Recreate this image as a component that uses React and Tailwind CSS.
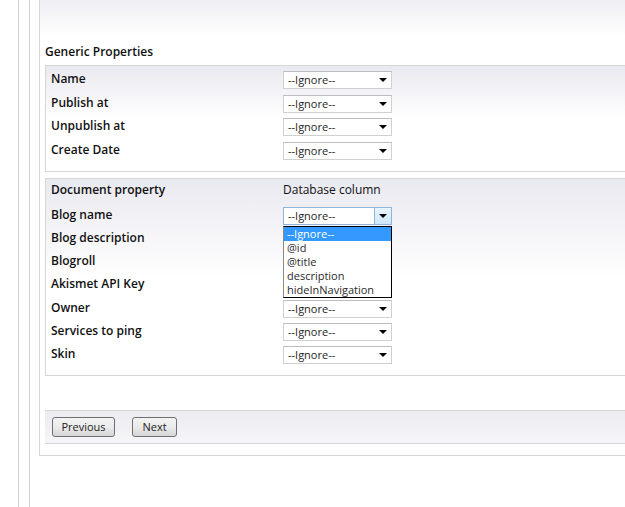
import React from "react";

const font = { fontFamily: '"Open Sans", "Noto Sans", sans-serif' };

function Select({ open = false }) {
  return (
    <div className="relative h-[18px] w-[109px] shrink-0">
      <div
        className={
          "flex h-[18px] w-[109px] items-center border bg-white " +
          (open ? "border-[#8fb5dc]" : "border-[#d0d0d0] border-t-[#bdbdbd]")
        }
      >
        <span className="flex-1 pl-[4px] text-[11px] leading-[16px] text-[#1e1e1e]">--Ignore--</span>
        <span
          className={
            "flex h-[16px] w-[17px] items-center justify-center " +
            (open ? "border-l border-[#8fb5dc] bg-gradient-to-b from-[#e9f4fd] to-[#cfe6fb]" : "")
          }
        >
          <svg width="8" height="4" viewBox="0 0 8 4">
            <path d="M0 0 H8 L4 4 Z" fill="#000" />
          </svg>
        </span>
      </div>
      {open && (
        <div className="absolute left-0 top-[19px] z-10 w-[109px] border border-black border-l-[#8a8a8a] bg-white text-[11px] leading-[14px] text-[#2a2a2a]">
          <div className="h-[14px] bg-[#3399ff] pl-[3px] text-white">--Ignore--</div>
          <div className="h-[14px] pl-[3px]">@id</div>
          <div className="h-[14px] pl-[3px]">@title</div>
          <div className="h-[14px] pl-[3px]">description</div>
          <div className="h-[14px] pl-[3px]">hideInNavigation</div>
        </div>
      )}
    </div>
  );
}

function Row({ label, open, hasSelect = true }) {
  return (
    <div className="flex h-[18px] items-start">
      <div className="mt-[1px] w-[232px] shrink-0 text-[12px] font-semibold leading-[14px] text-[#111]">{label}</div>
      {hasSelect && <Select open={open} />}
    </div>
  );
}

function Button({ children, w }) {
  return (
    <button
      className={
        "h-[20px] rounded-[3px] border border-[#707070] bg-gradient-to-b from-[#f3f3f3] via-[#ebebeb] to-[#d6d6d6] text-[11px] leading-[16px] text-[#222] " +
        w
      }
    >
      {children}
    </button>
  );
}

export default function App() {
  return (
    <div className="flex h-[507px] w-[625px] overflow-hidden bg-white" style={font}>
      <div className="h-full w-[11px] shrink-0 ml-[18px] border-l border-[#cfcfcf]" />
      <div className="h-full w-[10px] shrink-0 border-l border-[#cfcfcf]" />
      <div className="h-[456px] w-[620px] shrink-0 border-l border-b border-[#d6d6d6]">
        <div className="h-[36px] bg-gradient-to-b from-[#efeff4] to-white" />
        <div className="pl-[5px]">
          <div className="h-[29px] pt-[8px] text-[12px] font-semibold leading-[16px] text-[#111]">
            Generic Properties
          </div>
          <div className="w-[600px] border border-[#d6d6d6] bg-gradient-to-b from-[#e9e9f0] via-white to-white pb-[11px] pl-[5px] pt-[5px]">
            <div className="flex flex-col gap-[5.5px]">
              <Row label="Name" />
              <Row label="Publish at" />
              <Row label="Unpublish at" />
              <Row label="Create Date" />
            </div>
          </div>
          <div className="mt-[6px] w-[600px] border border-[#d6d6d6] bg-gradient-to-b from-[#e9e9f0] via-white to-white pb-[11px] pl-[5px] pt-[3px]">
            <div className="flex h-[16px] items-center text-[12px] leading-[16px] text-[#111]">
              <div className="w-[232px] shrink-0 font-semibold">Document property</div>
              <div>Database column</div>
            </div>
            <div className="mt-[9px] flex flex-col gap-[5.3px]">
              <Row label="Blog name" open />
              <Row label="Blog description" hasSelect={false} />
              <Row label="Blogroll" hasSelect={false} />
              <Row label="Akismet API Key" hasSelect={false} />
              <Row label="Owner" />
              <Row label="Services to ping" />
              <Row label="Skin" />
            </div>
          </div>
          <div className="mt-[34px] flex h-[34px] w-[600px] items-center gap-[17px] border-y border-[#d6d6d6] bg-gradient-to-b from-[#ebebf0] to-[#f6f6f9] pl-[7px]">
            <Button w="w-[63px]">Previous</Button>
            <Button w="w-[45px]">Next</Button>
          </div>
        </div>
      </div>
    </div>
  );
}
